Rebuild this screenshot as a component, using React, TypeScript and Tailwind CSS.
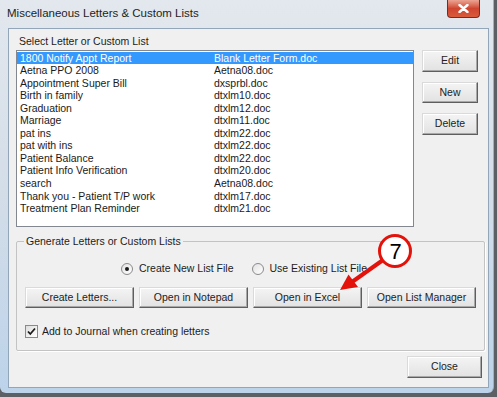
const rows = [
  ["1800 Notify Appt Report", "Blank Letter Form.doc"],
  ["Aetna PPO 2008", "Aetna08.doc"],
  ["Appointment Super Bill", "dxsprbl.doc"],
  ["Birth in family", "dtxlm10.doc"],
  ["Graduation", "dtxlm12.doc"],
  ["Marriage", "dtxlm11.doc"],
  ["pat ins", "dtxlm22.doc"],
  ["pat with ins", "dtxlm22.doc"],
  ["Patient Balance", "dtxlm22.doc"],
  ["Patient Info Verification", "dtxlm20.doc"],
  ["search", "Aetna08.doc"],
  ["Thank you - Patient T/P work", "dtxlm17.doc"],
  ["Treatment Plan Reminder", "dtxlm21.doc"],
];

function WinButton({ label, className = "" }: { label: string; className?: string }) {
  return (
    <button
      className={`flex items-center justify-center bg-linear-to-b from-[#f4f4f4] to-[#e2e2e2] border border-t-[#dadada] border-l-[#dadada] border-r-[#5e5e5e] border-b-[#5e5e5e] shadow-[inset_-1px_-1px_0_#a8a8a8,inset_1px_1px_0_#ffffff] text-[#222] ${className}`}
    >
      {label}
    </button>
  );
}

function Radio({ checked, label }: { checked?: boolean; label: string }) {
  return (
    <div className="flex items-center gap-[6px]">
      <span className="w-[12px] h-[12px] rounded-full border border-[#8a8a8a] bg-linear-to-br from-[#e2e2e2] to-[#ffffff] flex items-center justify-center">
        {checked && <span className="w-[4px] h-[4px] rounded-full bg-[#1a1a1a]" />}
      </span>
      <span>{label}</span>
    </div>
  );
}

export default function App() {
  return (
    <div className="w-[497px] h-[397px] bg-[#5c5f63] font-['Liberation_Sans',Arial,sans-serif] text-[10.5px] text-[#1c1c1c] relative overflow-hidden">
      <div className="h-[393px] w-[494px] flex flex-col bg-linear-to-b from-[#e3e8ee] via-[#d3dde8] to-[#bcd3ea] rounded-b-[6px] border-r border-[#9fb0c2]">
        {/* title bar */}
        <div className="h-[28px] flex items-start justify-between shrink-0">
          <div className="pl-[7px] pt-[5px] text-[11.5px] text-[#1e1e1e]">
            Miscellaneous Letters &amp; Custom Lists
          </div>
          <div className="mr-[13px] w-[33px] h-[18px] rounded-b-[4px] border border-t-0 border-[#7a2a22] bg-linear-to-b from-[#eba393] via-[#cf4530] to-[#da5a3c] flex items-center justify-center">
            <svg width="11" height="9" viewBox="0 0 11 9">
              <path d="M1.5 1 L9.5 8 M9.5 1 L1.5 8" stroke="#ffffff" strokeWidth="2.4" strokeLinecap="round" />
            </svg>
          </div>
        </div>

        {/* client area */}
        <div className="mx-[8px] h-[360px] w-[481px] bg-[#f0f0f0] border border-[#93a5b8] flex flex-col">
          <div className="pl-[10px] pt-[5px] h-[21px]">Select Letter or Custom List</div>

          <div className="flex items-start pl-[7px]">
            <div className="w-[398px] h-[177px] bg-white border border-[#828790] py-[0.5px]">
              {rows.map(([name, file], i) => (
                <div
                  key={i}
                  className={`grid grid-cols-[194px_1fr] pl-[3px] h-[12.56px] leading-[12.56px] whitespace-nowrap ${
                    i === 0 ? "bg-[#3399ff] text-white" : "text-[#1a1a1a]"
                  }`}
                >
                  <span>{name}</span>
                  <span>{file}</span>
                </div>
              ))}
            </div>
            <div className="flex flex-col gap-[10px] ml-[8px]">
              <WinButton label="Edit" className="w-[56px] h-[22px]" />
              <WinButton label="New" className="w-[56px] h-[21px]" />
              <WinButton label="Delete" className="w-[56px] h-[22px]" />
            </div>
          </div>

          <fieldset className="ml-[7px] mt-[8px] w-[467px] h-[116px] border border-[#c3c3c3] rounded-[2px] shadow-[1px_1px_0_#ffffff] px-[8px]">
            <legend className="ml-[-1px] px-[2px] leading-[13px]">Generate Letters or Custom Lists</legend>
            <div className="flex items-center h-[13px] mt-[14px] pl-[96px] gap-[18px]">
              <Radio checked label="Create New List File" />
              <Radio label="Use Existing List File" />
            </div>
            <div className="flex gap-[5px] mt-[12px]">
              <WinButton label="Create Letters..." className="w-[109px] h-[21px]" />
              <WinButton label="Open in Notepad" className="w-[109px] h-[21px]" />
              <WinButton label="Open in Excel" className="w-[109px] h-[21px]" />
              <WinButton label="Open List Manager" className="w-[109px] h-[21px]" />
            </div>
            <div className="flex items-center gap-[4px] mt-[16px]">
              <span className="w-[13px] h-[13px] border border-[#8a8a8a] bg-linear-to-br from-[#dedede] to-[#ffffff] flex items-center justify-center">
                <svg width="9" height="9" viewBox="0 0 9 9">
                  <path d="M1 4.5 L3.3 7 L8 1.5" stroke="#1a1a1a" strokeWidth="1.8" fill="none" />
                </svg>
              </span>
              <span>Add to Journal when creating letters</span>
            </div>
          </fieldset>

          <div className="flex justify-end pr-[6px] mt-[5px]">
            <WinButton label="Close" className="w-[75px] h-[22px]" />
          </div>
        </div>
      </div>

      {/* red callout annotation */}
      <svg className="absolute left-0 top-0 pointer-events-none" width="497" height="397">
        <line x1="383" y1="260" x2="352" y2="282" stroke="#e3120b" strokeWidth="4" />
        <polygon points="340,290 348.5,274.5 358,287" fill="#e3120b" />
        <circle cx="395" cy="251" r="15.5" fill="#ffffff" stroke="#e3120b" strokeWidth="3" />
      </svg>
      <div className="absolute left-[380px] top-[236px] w-[31px] h-[31px] flex items-center justify-center text-[22px] leading-none text-black">
        7
      </div>
    </div>
  );
}
